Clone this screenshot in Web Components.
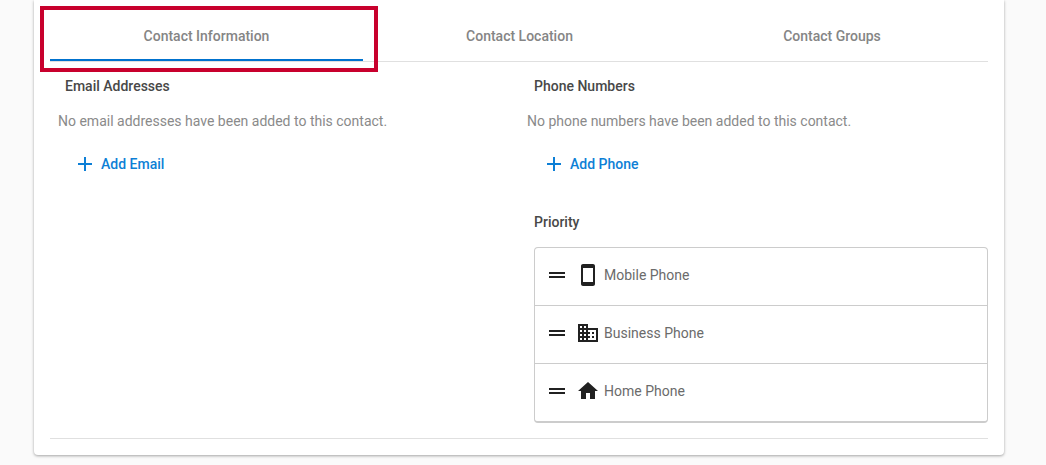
<!DOCTYPE html>
<html lang="en">
<head>
<meta charset="utf-8">
<title>Contact Information</title>
<style>
  html, body { margin: 0; padding: 0; background: #fafafa; }
  body { font-family: Roboto, "Liberation Sans", sans-serif; font-size: 14px; height: 465px; overflow: hidden; }
</style>
</head>
<body>
<contact-card>
  <contact-tabs slot="tabs">
    <contact-tab active>Contact Information</contact-tab>
    <contact-tab>Contact Location</contact-tab>
    <contact-tab>Contact Groups</contact-tab>
  </contact-tabs>

  <contact-section heading="Email Addresses" empty="No email addresses have been added to this contact.">
    <add-button>Add Email</add-button>
  </contact-section>

  <contact-section heading="Phone Numbers" empty="No phone numbers have been added to this contact.">
    <add-button>Add Phone</add-button>
    <priority-list slot="extra">
      <priority-row icon="mobile">Mobile Phone</priority-row>
      <priority-row icon="business">Business Phone</priority-row>
      <priority-row icon="home">Home Phone</priority-row>
    </priority-list>
  </contact-section>
</contact-card>
<red-highlight></red-highlight>

<script>
// Material icon paths
const ICONOS = {
  add: "M19 13h-6v6h-2v-6H5v-2h6V5h2v6h6v2z",
  drag: "M20 9H4v2h16V9zM4 15h16v-2H4v2z",
  mobile: "M17 1.01L7 1c-1.1 0-2 .9-2 2v18c0 1.1.9 2 2 2h10c1.1 0 2-.9 2-2V3c0-1.1-.9-1.99-2-1.99zM17 19H7V5h10v14z",
  business: "M12 7V3H2v18h20V7H12zM6 19H4v-2h2v2zm0-4H4v-2h2v2zm0-4H4V9h2v2zm0-4H4V5h2v2zm4 12H8v-2h2v2zm0-4H8v-2h2v2zm0-4H8V9h2v2zm0-4H8V5h2v2zm10 12h-8v-2h2v-2h-2v-2h2v-2h-2V9h8v10zm-2-8h-2v2h2v-2zm0 4h-2v2h2v-2z",
  home: "M10 20v-6h4v6h5v-8h3L12 3 2 12h3v8z"
};

function icono(nombre) {
  return `<svg width="24" height="24" viewBox="0 0 24 24" fill="currentColor" aria-hidden="true"><path d="${ICONOS[nombre]}"/></svg>`;
}

class ContactCard extends HTMLElement {
  constructor() {
    super();
    this.attachShadow({ mode: "open" });
    this.shadowRoot.innerHTML = `
      <style>
        :host {
          display: flex;
          flex-direction: column;
          box-sizing: border-box;
          width: 970px;
          height: 455px;
          margin-left: 34px;
          padding: 0 16px;
          background: #fff;
          border-radius: 0 0 4px 4px;
          box-shadow: 0 1px 3px rgba(0, 0, 0, 0.35);
        }
        .columnas {
          display: grid;
          grid-template-columns: 469px 469px;
          flex: 1;
          border-bottom: 1px solid #e0e0e0;
          margin-bottom: 16px;
        }
      </style>
      <slot name="tabs"></slot>
      <div class="columnas"><slot></slot></div>
    `;
  }
}

class ContactTabs extends HTMLElement {
  constructor() {
    super();
    this.attachShadow({ mode: "open" });
    this.shadowRoot.innerHTML = `
      <style>
        :host {
          display: grid;
          grid-template-columns: 313px 313px 312px;
          height: 62px;
          box-sizing: border-box;
          border-bottom: 1px solid #e0e0e0;
        }
      </style>
      <slot></slot>
    `;
  }
}

class ContactTab extends HTMLElement {
  constructor() {
    super();
    this.attachShadow({ mode: "open" });
    this.shadowRoot.innerHTML = `
      <style>
        :host {
          display: flex;
          align-items: center;
          justify-content: center;
          box-sizing: border-box;
          height: 61px;
          padding-top: 13px;
          font-size: 14px;
          font-weight: 500;
          color: #858585;
          border-bottom: 2px solid transparent;
        }
        :host([active]) { border-bottom-color: #0072ce; }
      </style>
      <slot></slot>
    `;
  }
}

class ContactSection extends HTMLElement {
  constructor() {
    super();
    this.attachShadow({ mode: "open" });
    this.shadowRoot.innerHTML = `
      <style>
        :host { display: flex; flex-direction: column; }
        h3 {
          margin: 0;
          padding: 16px 0 0 15px;
          font-size: 14px;
          line-height: 16px;
          font-weight: 500;
          color: #484848;
        }
        p {
          margin: 0;
          padding: 19px 0 0 8px;
          font-size: 14px;
          line-height: 16px;
          color: #8a8a8a;
        }
      </style>
      <h3></h3>
      <p></p>
      <slot></slot>
      <slot name="extra"></slot>
    `;
    this.shadowRoot.querySelector("h3").textContent = this.getAttribute("heading");
    this.shadowRoot.querySelector("p").textContent = this.getAttribute("empty");
  }
}

class AddButton extends HTMLElement {
  constructor() {
    super();
    this.attachShadow({ mode: "open" });
    this.shadowRoot.innerHTML = `
      <style>
        :host {
          display: flex;
          align-items: center;
          gap: 4px;
          height: 24px;
          margin: 23px 0 0 23px;
          font-size: 14px;
          font-weight: 500;
          color: #0d7fd6;
        }
        svg { display: block; }
      </style>
      ${icono("add")}
      <span><slot></slot></span>
    `;
  }
}

class PriorityList extends HTMLElement {
  constructor() {
    super();
    this.attachShadow({ mode: "open" });
    this.shadowRoot.innerHTML = `
      <style>
        :host { display: block; margin: 38px 0 0 15px; }
        h3 {
          margin: 0 0 17px;
          font-size: 14px;
          line-height: 16px;
          font-weight: 500;
          color: #484848;
        }
        .lista {
          box-sizing: border-box;
          height: 176px;
          border: 1px solid #ccc;
          border-bottom-width: 2px;
          border-radius: 4px;
          overflow: hidden;
        }
      </style>
      <h3>Priority</h3>
      <div class="lista"><slot></slot></div>
    `;
  }
}

class PriorityRow extends HTMLElement {
  constructor() {
    super();
    this.attachShadow({ mode: "open" });
    const nombre = this.getAttribute("icon");
    this.shadowRoot.innerHTML = `
      <style>
        :host {
          display: flex;
          align-items: center;
          box-sizing: border-box;
          height: 58px;
          padding: 0 0 3px 10px;
          font-size: 14px;
          color: #6b6b6b;
          border-bottom: 1px solid #ccc;
        }
        :host(:last-child) { border-bottom-color: transparent; }
        svg { display: block; color: #212121; flex: none; }
        .tipo { margin: 0 4px 0 7px; }
      </style>
      ${icono("drag")}
      <span class="tipo">${icono(nombre)}</span>
      <span><slot></slot></span>
    `;
  }
}

// Marco rojo de anotación, va encima de la pestaña activa
class RedHighlight extends HTMLElement {
  constructor() {
    super();
    this.attachShadow({ mode: "open" });
    this.shadowRoot.innerHTML = `
      <style>
        :host {
          position: absolute;
          left: 40px;
          top: 6px;
          width: 338px;
          height: 66px;
          box-sizing: border-box;
          border: 4px solid #c8002d;
          pointer-events: none;
        }
      </style>
    `;
  }
}

customElements.define("contact-card", ContactCard);
customElements.define("contact-tabs", ContactTabs);
customElements.define("contact-tab", ContactTab);
customElements.define("contact-section", ContactSection);
customElements.define("add-button", AddButton);
customElements.define("priority-list", PriorityList);
customElements.define("priority-row", PriorityRow);
customElements.define("red-highlight", RedHighlight);
</script>
</body>
</html>
